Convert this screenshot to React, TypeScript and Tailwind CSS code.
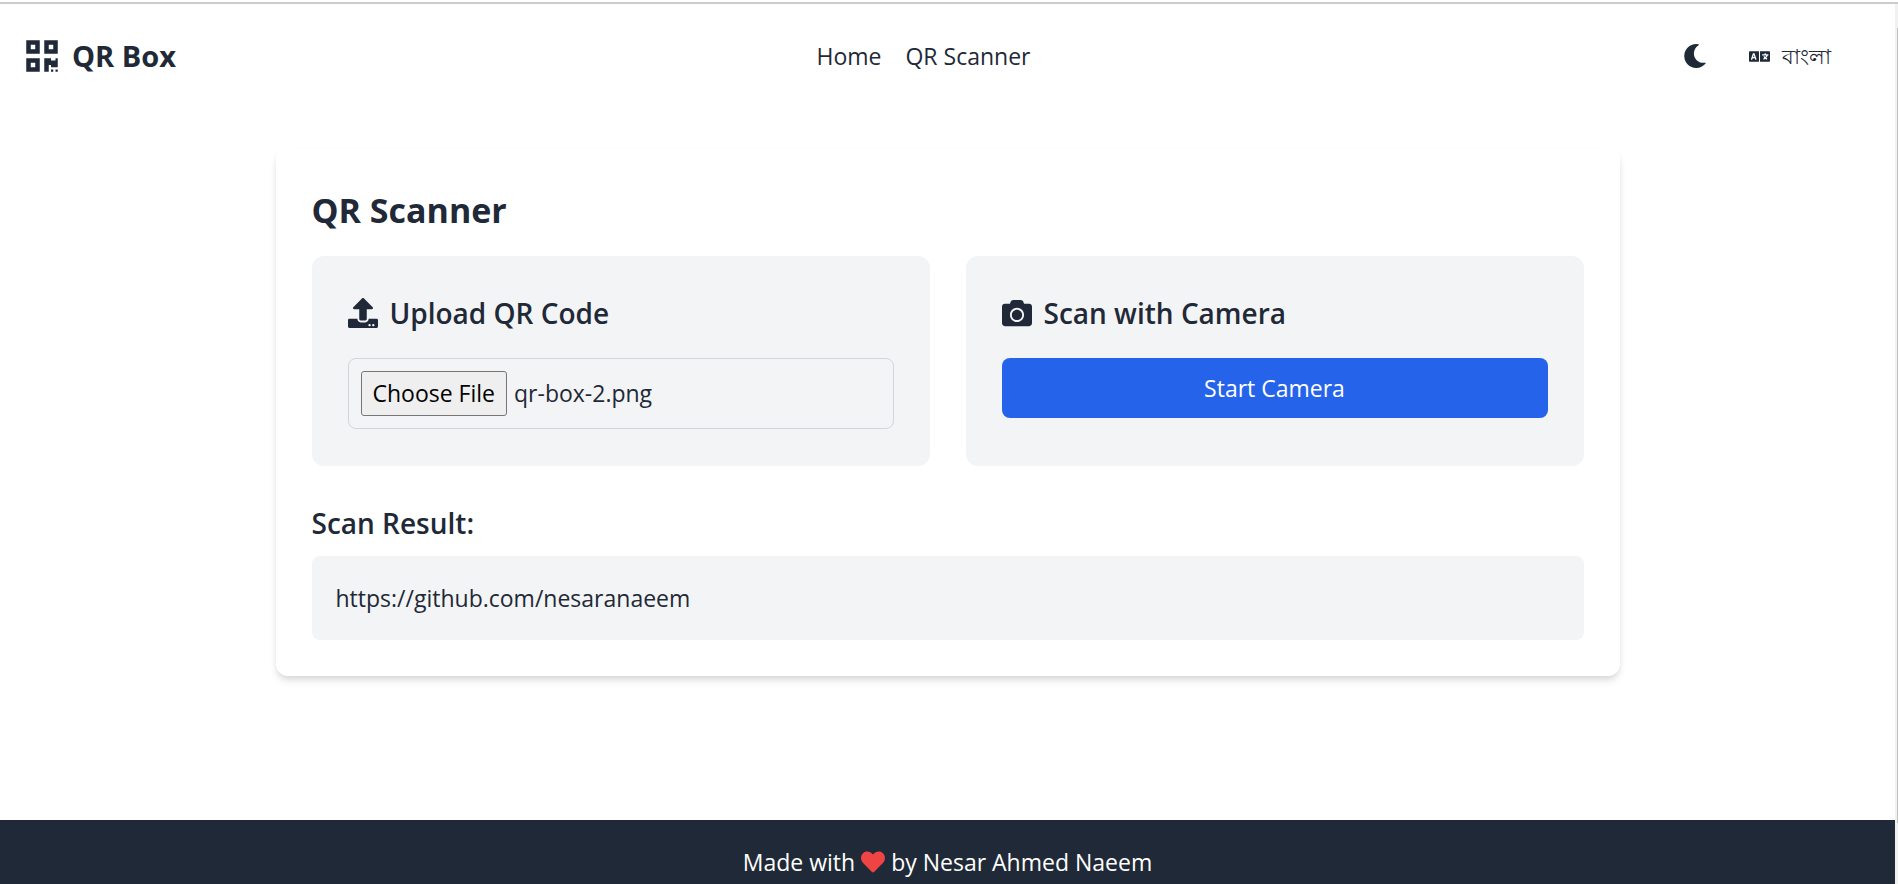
import { useEffect, useRef } from "react";
import { FaCamera, FaHeart, FaLanguage, FaMoon, FaQrcode, FaUpload } from "react-icons/fa";

function Header() {
  return (
    <header className="flex h-[104px] items-center justify-between px-6">
      <a href="#" className="flex items-center gap-3 text-[29px] leading-9 font-bold">
        <FaQrcode className="size-9" />
        QR Box
      </a>
      <nav className="flex gap-6 text-[23px] leading-9">
        <a href="#">Home</a>
        <a href="#scanner">QR Scanner</a>
      </nav>
      <div className="flex items-center gap-[18px]">
        <button type="button" aria-label="Toggle dark mode" className="p-3">
          <FaMoon className="size-6" />
        </button>
        <button type="button" className="flex items-center gap-3 pr-10 pl-3 text-[21px] leading-8">
          <FaLanguage className="size-[21px]" />
          বাংলা
        </button>
      </div>
    </header>
  );
}

function UploadPanel() {
  const inputRef = useRef<HTMLInputElement>(null);

  useEffect(() => {
    const transfer = new DataTransfer();
    transfer.items.add(new File([""], "qr-box-2.png", { type: "image/png" }));
    if (inputRef.current) inputRef.current.files = transfer.files;
  }, []);

  return (
    <section className="rounded-xl bg-gray-100 px-9 pt-9 pb-[37px]">
      <label htmlFor="qr-file" className="mb-6 flex items-center gap-3 text-[28px] leading-[42px] font-semibold">
        <FaUpload className="size-[30px]" />
        Upload QR Code
      </label>
      <input
        ref={inputRef}
        id="qr-file"
        type="file"
        accept="image/*"
        className="block w-full rounded-lg border border-gray-300 p-3 text-[23px] leading-[35px] file:mr-[7px] file:rounded-[3px] file:border file:border-solid file:border-[#767676] file:bg-[#efefef] file:px-[11px] file:py-1 file:text-black"
      />
    </section>
  );
}

function CameraPanel() {
  return (
    <section className="rounded-xl bg-gray-100 px-9 pt-9 pb-[37px]">
      <h2 className="mb-6 flex items-center gap-3 text-[28px] leading-[42px] font-semibold">
        <FaCamera className="size-[30px]" />
        Scan with Camera
      </h2>
      <button type="button" className="w-full rounded-lg bg-[#2563eb] py-3 text-[23px] leading-9 text-white">
        Start Camera
      </button>
    </section>
  );
}

export default function App() {
  return (
    <div className="flex min-h-screen flex-col border-t-2 border-white bg-white font-['Open_Sans','Noto_Sans',sans-serif] text-[#1f2937]">
      <div className="h-[2px] bg-[#cccccc]" />
      <div className="flex flex-1">
        <div className="flex flex-1 flex-col">
          <Header />
          <main id="scanner" className="flex-1 py-10">
            <div className="mx-auto max-w-[1344px] rounded-xl p-9 shadow-[0_6px_9px_-1px_rgba(0,0,0,0.1),0_3px_6px_-2px_rgba(0,0,0,0.1)]">
              <h1 className="mb-5 text-[34px] leading-[52px] font-bold">QR Scanner</h1>
              <div className="grid grid-cols-2 gap-9">
                <UploadPanel />
                <CameraPanel />
              </div>
              <h2 className="mt-9 mb-3 text-[28px] leading-[42px] font-semibold">Scan Result:</h2>
              <p className="rounded-lg bg-gray-100 p-6 text-[23px] leading-9">https://github.com/nesaranaeem</p>
            </div>
          </main>
          <footer className="flex items-center justify-center gap-1.5 bg-[#1f2937] pt-6 pb-1 text-[23px] leading-9 text-white">
            Made with <FaHeart className="size-6 text-[#ef4444]" /> by Nesar Ahmed Naeem
          </footer>
        </div>
        <div aria-hidden="true" className="flex w-[3px] justify-end bg-[#f1f1f1] pt-6 pb-[61px]">
          <div className="w-px bg-[#c1c1c1]" />
        </div>
      </div>
    </div>
  );
}
